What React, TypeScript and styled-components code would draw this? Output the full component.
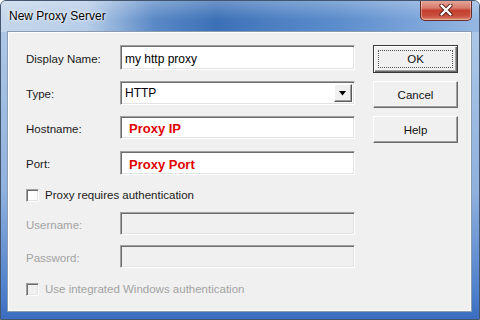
import React from "react";
import styled, { createGlobalStyle, css } from "styled-components";

const Global = createGlobalStyle`
  html, body { margin: 0; padding: 0; background: #ffffff; }
  body { font-family: "Liberation Sans", Arial, sans-serif; }
  * { box-sizing: border-box; }
`;

const Window = styled.div`
  width: 480px;
  height: 320px;
  display: flex;
  flex-direction: column;
  border: 1px solid #44556e;
  border-radius: 6px 6px 0 0;
  overflow: hidden;
  background: linear-gradient(to bottom, #b3cbe8 0%, #8fb1de 60%, #4d7fcb 92%, #3a6cc0 100%);
`;

const TitleBar = styled.div`
  height: 31px;
  flex: none;
  display: flex;
  align-items: flex-start;
  justify-content: space-between;
  padding-left: 8px;
  background:
    linear-gradient(to bottom, rgba(255,255,255,0.25), rgba(255,255,255,0) 60%),
    linear-gradient(to right, #c4d6ea 0%, #b7cde8 18%, #5a89c6 32%, #3c70b6 45%, #4e80c2 58%, #5b8ccb 70%, #77a1d8 85%, #95b8e2 100%);
`;

const Title = styled.div`
  margin-top: 7px;
  font-size: 12px;
  line-height: 16px;
  color: #000;
  text-shadow: 0 0 5px rgba(255,255,255,0.95), 0 0 2px rgba(255,255,255,0.9);
`;

const CloseButton = styled.div`
  width: 52px;
  height: 21px;
  margin-top: -1px;
  margin-right: 7px;
  border: 1px solid #6a2a22;
  border-top: none;
  border-radius: 0 0 5px 5px;
  display: flex;
  align-items: center;
  justify-content: center;
  background: linear-gradient(to bottom, #e6a99c 0%, #d77b6c 40%, #c43f2e 52%, #c9503f 80%, #dc8a70 100%);
  box-shadow: inset 0 0 0 1px rgba(255,255,255,0.35);
`;

const Client = styled.div`
  flex: 1;
  margin: 0 8px 8px 7px;
  display: flex;
  align-items: flex-start;
  gap: 18px;
  padding: 12px 0 0 17px;
  background: #f0f0f0;
  border: 1px solid #ffffff;
  box-shadow: 0 0 0 1px #8a9ab0;
`;

const Form = styled.div`
  display: flex;
  flex-direction: column;
  width: 329px;
`;

const Row = styled.div<{ $mt: number; $h: number }>`
  display: grid;
  grid-template-columns: 94px 235px;
  align-items: center;
  height: ${(p) => p.$h}px;
  margin-top: ${(p) => p.$mt}px;
`;

const Label = styled.div<{ $disabled?: boolean }>`
  font-size: 11.5px;
  color: ${(p) => (p.$disabled ? "#a3a3a3" : "#1a1a1a")};
  padding-top: 2px;
`;

const sunken = css`
  border: 1px solid;
  border-color: #a0a0a0 #ffffff #ffffff #a0a0a0;
  box-shadow: inset 1px 1px 0 #6e6e6e, inset -1px -1px 0 #e3e3e3;
`;

const TextBox = styled.div<{ $disabled?: boolean }>`
  ${sunken};
  height: 100%;
  display: flex;
  align-items: center;
  padding: 2px 0 0 4px;
  background: ${(p) => (p.$disabled ? "#f0f0f0" : "#ffffff")};
  font-size: 12px;
  color: #000;
  white-space: nowrap;
`;

const RedText = styled.span`
  color: #e00000;
  font-weight: bold;
  font-size: 13px;
  padding-left: 4px;
`;

const SelectBox = styled(TextBox)`
  justify-content: space-between;
  padding: 2px 2px 2px 4px;
`;

const DropButton = styled.div`
  width: 18px;
  height: 18px;
  display: flex;
  align-items: center;
  justify-content: center;
  background: #f0f0f0;
  border: 1px solid;
  border-color: #ffffff #5a5a5a #5a5a5a #ffffff;
  box-shadow: inset -1px -1px 0 #a0a0a0;
`;

const CheckRow = styled.div<{ $mt: number; $disabled?: boolean }>`
  display: flex;
  align-items: center;
  gap: 6px;
  height: 14px;
  margin-top: ${(p) => p.$mt}px;
  font-size: 11.5px;
  color: ${(p) => (p.$disabled ? "#a3a3a3" : "#1a1a1a")};
`;

const CheckBox = styled.div<{ $disabled?: boolean }>`
  ${sunken};
  width: 13px;
  height: 13px;
  flex: none;
  background: ${(p) => (p.$disabled ? "#f0f0f0" : "#ffffff")};
`;

const Buttons = styled.div`
  display: flex;
  flex-direction: column;
  gap: 8px;
  width: 85px;
`;

const Button = styled.div<{ $default?: boolean }>`
  height: 27px;
  display: flex;
  align-items: center;
  justify-content: center;
  font-size: 11.5px;
  color: #111;
  background: #f0f0f0;
  border: 1px solid;
  border-color: #ffffff #696969 #696969 #ffffff;
  box-shadow: inset -1px -1px 0 #a0a0a0;
  position: relative;
  ${(p) =>
    p.$default &&
    css`
      height: 28px;
      border: 1px solid #3a3a3a;
      box-shadow: inset 1px 1px 0 #ffffff, inset -1px -1px 0 #696969, inset -2px -2px 0 #a0a0a0;
    `}
`;

const FocusRect = styled.span`
  position: absolute;
  inset: 4px;
  border: 1px dotted #555;
  pointer-events: none;
`;

export default function App() {
  return (
    <>
      <Global />
      <Window>
        <TitleBar>
          <Title>New Proxy Server</Title>
          <CloseButton>
            <svg width="14" height="12" viewBox="0 0 14 12">
              <path d="M2.5 1.5 L11.5 10.5 M11.5 1.5 L2.5 10.5" stroke="#5a1f1a" strokeWidth="4.2" strokeLinecap="round" />
              <path d="M2.5 1.5 L11.5 10.5 M11.5 1.5 L2.5 10.5" stroke="#ffffff" strokeWidth="2.4" strokeLinecap="round" />
            </svg>
          </CloseButton>
        </TitleBar>
        <Client>
          <Form>
            <Row $mt={0} $h={25}>
              <Label>Display Name:</Label>
              <TextBox>my http proxy</TextBox>
            </Row>
            <Row $mt={11} $h={24}>
              <Label>Type:</Label>
              <SelectBox>
                <span>HTTP</span>
                <DropButton>
                  <svg width="8" height="5" viewBox="0 0 8 5">
                    <path d="M0 0 H7 L3.5 4.5 Z" fill="#000" />
                  </svg>
                </DropButton>
              </SelectBox>
            </Row>
            <Row $mt={11} $h={23}>
              <Label>Hostname:</Label>
              <TextBox>
                <RedText>Proxy IP</RedText>
              </TextBox>
            </Row>
            <Row $mt={12} $h={24}>
              <Label>Port:</Label>
              <TextBox>
                <RedText>Proxy Port</RedText>
              </TextBox>
            </Row>
            <CheckRow $mt={13}>
              <CheckBox />
              <span>Proxy requires authentication</span>
            </CheckRow>
            <Row $mt={10} $h={23}>
              <Label $disabled>Username:</Label>
              <TextBox $disabled />
            </Row>
            <Row $mt={10} $h={23}>
              <Label $disabled>Password:</Label>
              <TextBox $disabled />
            </Row>
            <CheckRow $mt={14} $disabled>
              <CheckBox $disabled />
              <span>Use integrated Windows authentication</span>
            </CheckRow>
          </Form>
          <Buttons>
            <Button $default>
              OK
              <FocusRect />
            </Button>
            <Button>Cancel</Button>
            <Button>Help</Button>
          </Buttons>
        </Client>
      </Window>
    </>
  );
}
